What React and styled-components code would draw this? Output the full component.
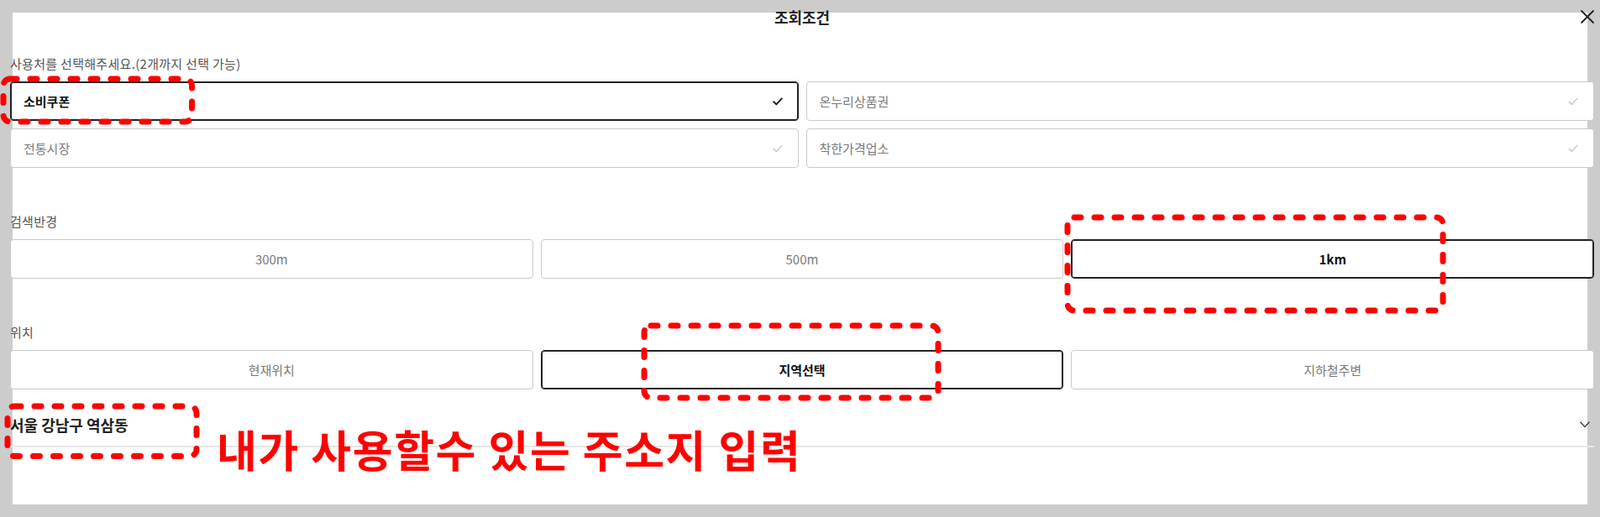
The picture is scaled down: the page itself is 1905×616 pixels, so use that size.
import React, { useState } from "react";
import styled, { createGlobalStyle } from "styled-components";

const USE_PLACES = ["소비쿠폰", "온누리상품권", "전통시장", "착한가격업소"];
const RADIUS = ["300m", "500m", "1km"];
const LOCATIONS = ["현재위치", "지역선택", "지하철주변"];

// 빨간 점선 표시 (스크린샷 위 주석)
const MARKS = [
  { id: "place", x: 3.5, y: 94, w: 224.5, h: 51 },
  { id: "radius", x: 1271, y: 259, w: 447, h: 111 },
  { id: "location", x: 767, y: 388, w: 350, h: 86 },
  { id: "address", x: 9, y: 484, w: 225, h: 59.5 },
];

const CheckIcon = ({ on }) => (
  <CheckSvg viewBox="0 0 12 10" $on={on}>
    <polyline points="1.2,5.2 4.4,8.4 10.8,1.4" />
  </CheckSvg>
);

const DashedMark = ({ x, y, w, h }) => (
  <MarkSvg $x={x - 5} $y={y - 5} width={w + 10} height={h + 10}>
    <rect x="5" y="5" width={w} height={h} rx="8" ry="8" />
  </MarkSvg>
);

const App = () => {
  const [places, setPlaces] = useState(["소비쿠폰"]);
  const [radius, setRadius] = useState("1km");
  const [location, setLocation] = useState("지역선택");

  const togglePlace = (name) => {
    setPlaces((current) => {
      if (current.includes(name)) return current.filter((v) => v !== name);
      if (current.length >= 2) return current;
      return [...current, name];
    });
  };

  return (
    <Page>
      <GlobalStyle />
      <Panel>
        <Content>
          <Header>
            <Title>조회조건</Title>
            <CloseBtn aria-label="닫기">
              <svg width="18" height="18" viewBox="0 0 18 18">
                <path d="M1.5 1.5 L16.5 16.5 M16.5 1.5 L1.5 16.5" stroke="#222" strokeWidth="1.8" fill="none" />
              </svg>
            </CloseBtn>
          </Header>

          <Section $first>
            <Label>사용처를 선택해주세요.(2개까지 선택 가능)</Label>
            <Grid $cols={2}>
              {USE_PLACES.map((name) => {
                const on = places.includes(name);
                return (
                  <PlaceBtn key={name} $on={on} onClick={() => togglePlace(name)}>
                    <span>{name}</span>
                    <CheckIcon on={on} />
                  </PlaceBtn>
                );
              })}
            </Grid>
          </Section>

          <Section>
            <Label>검색반경</Label>
            <Grid $cols={3}>
              {RADIUS.map((v) => (
                <OptionBtn key={v} $on={radius === v} onClick={() => setRadius(v)}>
                  {v}
                </OptionBtn>
              ))}
            </Grid>
          </Section>

          <Section>
            <Label>위치</Label>
            <Grid $cols={3}>
              {LOCATIONS.map((v) => (
                <OptionBtn key={v} $on={location === v} onClick={() => setLocation(v)}>
                  {v}
                </OptionBtn>
              ))}
            </Grid>
          </Section>

          <AddressRow>
            <AddressText>서울 강남구 역삼동</AddressText>
            <svg width="12" height="8" viewBox="0 0 12 8">
              <polyline points="0.6,0.8 6,6.6 11.4,0.8" stroke="#333" strokeWidth="1.3" fill="none" />
            </svg>
          </AddressRow>
        </Content>
      </Panel>

      {MARKS.map((m) => (
        <DashedMark key={m.id} {...m} />
      ))}
      <Note>내가 사용할수 있는 주소지 입력</Note>
    </Page>
  );
};

const GlobalStyle = createGlobalStyle`
  html, body {
    margin: 0;
    padding: 0;
  }
  body {
    background: #cccccc;
    font-family: "Noto Sans CJK KR", "Noto Sans", sans-serif;
  }
  * {
    box-sizing: border-box;
  }
`;

const Page = styled.div`
  position: relative;
  height: 616px;
  padding: 15px;
  overflow: hidden;
`;

const Panel = styled.div`
  display: flow-root;
  height: 586px;
  background: #ffffff;
`;

const Content = styled.div`
  margin: -7px -8px 0 -3px;
`;

// Header
const Header = styled.div`
  position: relative;
  height: 24px;
  display: flex;
  align-items: center;
  justify-content: center;
`;
const Title = styled.h2`
  margin: 0;
  font-size: 18px;
  line-height: 24px;
  font-weight: 700;
  color: #222;
`;
const CloseBtn = styled.button`
  position: absolute;
  right: -1px;
  top: 50%;
  transform: translateY(-50%);
  width: 18px;
  height: 18px;
  padding: 0;
  border: 0;
  background: none;
  display: flex;
  cursor: pointer;
`;

// Section
const Section = styled.div`
  margin-top: ${(p) => (p.$first ? "34px" : "54px")};
`;
const Label = styled.div`
  font-size: 15px;
  line-height: 20px;
  letter-spacing: 0.3px;
  color: #555;
  margin-bottom: 11px;
`;
const Grid = styled.div`
  display: grid;
  grid-template-columns: repeat(${(p) => p.$cols}, 1fr);
  gap: 9px;
`;

const BaseBtn = styled.button`
  height: 47px;
  border: 1px solid ${(p) => (p.$on ? "#222" : "#c8cacd")};
  box-shadow: ${(p) => (p.$on ? "inset 0 0 0 1px #222" : "none")};
  border-radius: 4px;
  background: #fff;
  font-family: inherit;
  font-size: 15px;
  font-weight: ${(p) => (p.$on ? 700 : 400)};
  color: ${(p) => (p.$on ? "#111" : "#7a7a7a")};
  cursor: pointer;
`;
const PlaceBtn = styled(BaseBtn)`
  display: flex;
  align-items: center;
  justify-content: space-between;
  padding: 0 18px 0 15px;
  text-align: left;
`;
const OptionBtn = styled(BaseBtn)`
  display: flex;
  align-items: center;
  justify-content: center;
  padding: 0;
`;
const CheckSvg = styled.svg`
  width: 12px;
  height: 10px;
  polyline {
    fill: none;
    stroke: ${(p) => (p.$on ? "#222" : "#c4c4c4")};
    stroke-width: ${(p) => (p.$on ? 2 : 1.4)};
    stroke-linecap: round;
    stroke-linejoin: round;
  }
`;

// Address
const AddressRow = styled.div`
  margin-top: 19px;
  height: 50px;
  border-bottom: 2px solid #e6e6e6;
  display: flex;
  align-items: center;
  justify-content: space-between;
  padding: 0 5px 2px 0;
`;
const AddressText = styled.div`
  font-size: 18px;
  font-weight: 700;
  color: #222;
`;

// Annotation
const MarkSvg = styled.svg`
  position: absolute;
  left: ${(p) => p.$x}px;
  top: ${(p) => p.$y}px;
  overflow: visible;
  pointer-events: none;
  rect {
    fill: none;
    stroke: #ff0000;
    stroke-width: 7;
    stroke-dasharray: 8 16;
    stroke-linecap: round;
  }
`;
const Note = styled.div`
  position: absolute;
  left: 258px;
  top: 505px;
  font-size: 52px;
  line-height: 60px;
  letter-spacing: 1.6px;
  font-weight: 700;
  color: #ff0000;
  white-space: nowrap;
`;

export default App;
